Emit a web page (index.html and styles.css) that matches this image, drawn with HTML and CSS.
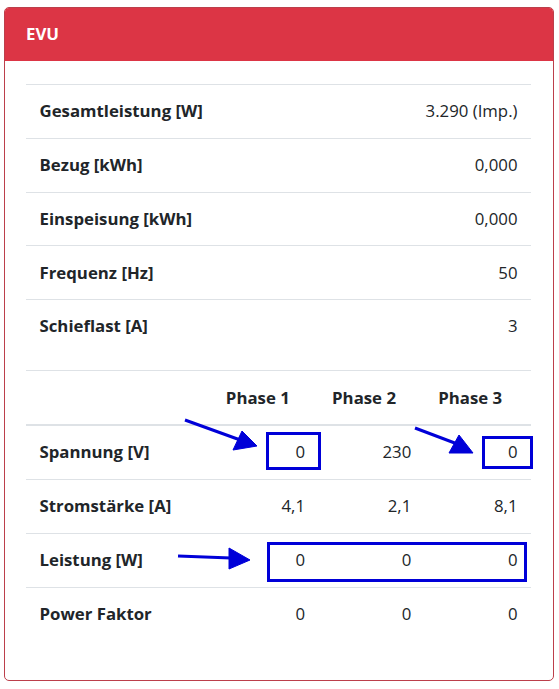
FILE: index.html
```html
<!DOCTYPE html>
<html lang="de">
<head>
<meta charset="utf-8">
<title>EVU</title>
<link rel="stylesheet" href="styles.css">
</head>
<body>
<div class="page">
  <div class="card">
    <div class="card-header">EVU</div>
    <div class="card-body">
      <table class="table">
        <tbody>
          <tr><th>Gesamtleistung [W]</th><td class="num">3.290 (Imp.)</td></tr>
          <tr><th>Bezug [kWh]</th><td class="num">0,000</td></tr>
          <tr><th>Einspeisung [kWh]</th><td class="num">0,000</td></tr>
          <tr><th>Frequenz [Hz]</th><td class="num">50</td></tr>
          <tr><th>Schieflast [A]</th><td class="num">3</td></tr>
        </tbody>
      </table>
      <table class="table phases">
        <colgroup>
          <col class="col-label"><col class="col-phase"><col class="col-phase"><col class="col-phase">
        </colgroup>
        <thead>
          <tr><th></th><th class="ph">Phase 1</th><th class="ph">Phase 2</th><th class="ph">Phase 3</th></tr>
        </thead>
        <tbody>
          <tr><th>Spannung [V]</th><td class="num">0</td><td class="num">230</td><td class="num">0</td></tr>
          <tr><th>Stromstärke [A]</th><td class="num">4,1</td><td class="num">2,1</td><td class="num">8,1</td></tr>
          <tr><th>Leistung [W]</th><td class="num">0</td><td class="num">0</td><td class="num">0</td></tr>
          <tr><th>Power Faktor</th><td class="num">0</td><td class="num">0</td><td class="num">0</td></tr>
        </tbody>
      </table>
    </div>
  </div>
  <svg class="annot" width="559" height="689" viewBox="0 0 559 689" aria-hidden="true">
    <g fill="#0000d8" stroke="#0000d8" stroke-linejoin="round">
      <line x1="185" y1="420" x2="243" y2="441" stroke-width="3"/>
      <polygon points="233,450 242,431 257,446" stroke-width="1"/>
      <line x1="415" y1="428" x2="460" y2="445" stroke-width="3"/>
      <polygon points="449,453 459,435 473,453" stroke-width="1"/>
      <line x1="178" y1="556" x2="231" y2="558" stroke-width="3"/>
      <polygon points="229,548 229,569 250,560" stroke-width="1"/>
    </g>
    <g fill="none" stroke="#0000d8" stroke-width="3">
      <rect x="267.5" y="433.5" width="52" height="35"/>
      <rect x="483.5" y="437.5" width="48" height="30"/>
      <rect x="268.5" y="543.5" width="257" height="37"/>
    </g>
  </svg>
</div>
</body>
</html>
```

FILE: styles.css
```css
html, body {
  margin: 0;
  padding: 0;
  background: #ffffff;
}

body {
  font-family: "Open Sans", "Noto Sans", "DejaVu Sans", sans-serif;
  font-size: 16.8px;
  color: #212529;
}

.page {
  position: relative;
  width: 559px;
  height: 689px;
  padding: 7px 0 0 4px;
  box-sizing: border-box;
}

.card {
  width: 550px;
  box-sizing: border-box;
  border: 1px solid #bc3f4b;
  border-radius: 5px;
  background: #ffffff;
}

.card-header {
  background: #dc3545;
  color: #ffffff;
  font-weight: 700;
  line-height: 26.4px;
  padding: 13.2px 21px 13.4px;
  border-radius: 4px 4px 0 0;
}

.card-body {
  padding: 23px 22px 22px 21px;
}

.table {
  width: 100%;
  border-collapse: collapse;
  margin-bottom: 17.6px;
  line-height: 26.4px;
}

.table th,
.table td {
  padding: 13.2px 13.5px;
  border-top: 1px solid #dee2e6;
  vertical-align: middle;
}

.table th {
  text-align: left;
  font-weight: 700;
}

.table td.num {
  text-align: right;
  font-weight: 400;
}

.phases {
  table-layout: fixed;
}

.col-label {
  width: 186px;
}

.col-phase {
  width: 106px;
}

.phases thead th {
  border-bottom: 2px solid #dee2e6;
}

.phases thead th.ph {
  text-align: right;
  padding-right: 29px;
  white-space: nowrap;
}

.annot {
  position: absolute;
  left: 0;
  top: 0;
  pointer-events: none;
}
```
